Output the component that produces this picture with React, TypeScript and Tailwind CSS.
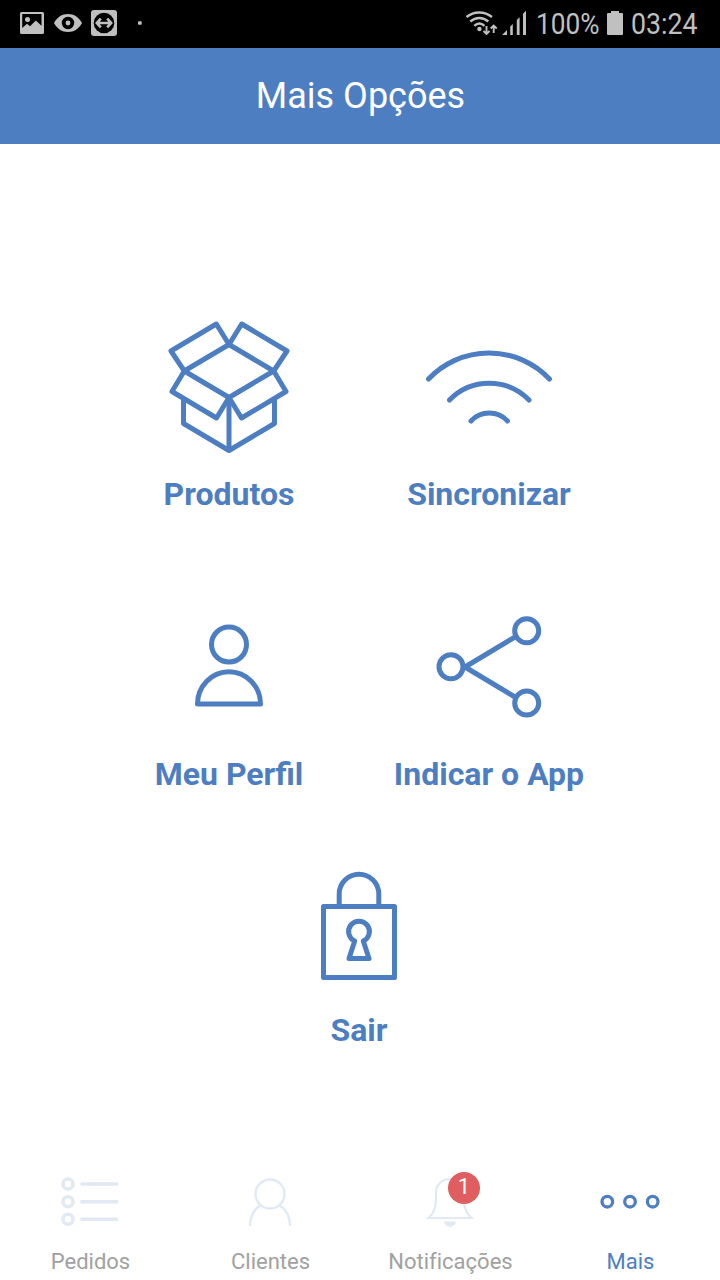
import type { ReactNode } from "react";

const BLUE = "#4d7ec1";
const PALE = "#e1e9f5";

function Tile({ label, viewBox, children }: { label: string; viewBox: string; children: ReactNode }) {
  return (
    <button className="flex w-[260px] flex-col items-center text-[#4d7ec1]">
      <svg
        className="h-[140px] w-[140px]"
        viewBox={viewBox}
        fill="none"
        stroke={BLUE}
        strokeWidth={5}
        strokeLinejoin="round"
        strokeLinecap="round"
      >
        {children}
      </svg>
      <span className="mt-[17px] text-[32px] leading-10 font-bold whitespace-nowrap">{label}</span>
    </button>
  );
}

function Tab({ label, active, children }: { label: string; active?: boolean; children: ReactNode }) {
  return (
    <button className="flex flex-1 flex-col items-center">
      <svg className="h-[76px] w-[80px]" viewBox="0 0 80 76" fill="none" stroke={active ? BLUE : PALE}>
        {children}
      </svg>
      <span
        className={
          active
            ? "mt-2 pl-px text-[22px] leading-7 text-[#4d7ec1]"
            : "mt-2 pl-px text-[22px] leading-7 text-[#a1a1a1] [font-variant-ligatures:none]"
        }
      >
        {label}
      </span>
    </button>
  );
}

function StatusBar() {
  return (
    <div className="flex h-12 items-center justify-between bg-black text-[#c0c0c0]">
      <svg className="h-12 w-[150px]" viewBox="0 0 150 48" fill="#c0c0c0">
        <path
          fillRule="evenodd"
          d="M21.500 12h21a1.500 1.500 0 0 1 1.500 1.500v19a1.500 1.500 0 0 1-1.500 1.500h-21a1.500 1.500 0 0 1-1.500-1.500v-19a1.500 1.500 0 0 1 1.500-1.500Zm.7 2v14l4.800-4.200 3 2.500 5.800-5.800 5.700 5.300V14Z"
        />
        <circle cx="27.500" cy="19.400" r="2.500" />
        <path
          fillRule="evenodd"
          d="M54 23c3-5.700 8-9 14-9s11 3.300 14 9c-3 5.700-8 9-14 9s-11-3.300-14-9Zm14-6.200a6.200 6.200 0 1 0 0 12.400a6.200 6.200 0 0 0 0-12.400Z"
        />
        <circle cx="68" cy="23" r="2.400" />
        <rect x="91" y="10" width="26" height="26" rx="3" />
        <circle cx="104" cy="23" r="10.300" fill="#000" />
        <path
          d="M97 23h14M100.800 18.700 96.800 23l4 4.300M107.200 18.700l4 4.300-4 4.300"
          fill="none"
          stroke="#c0c0c0"
          strokeWidth="2.600"
        />
        <rect x="138" y="21.300" width="3.700" height="3.500" rx="0.800" />
      </svg>
      <div className="flex h-12 items-center">
        <svg className="h-12 w-[66px]" viewBox="464 0 66 48" fill="none" stroke="#c0c0c0" strokeWidth="2.400">
          <path d="M466.500 17c7.500-6 18-6 25.500 0M470.300 21.500c5.500-4.700 12.500-4.700 18 0M474.300 25.800c3.200-2.800 7-2.800 10.200 0" />
          <circle cx="479.400" cy="29" r="2.200" fill="#c0c0c0" stroke="none" />
          <path strokeWidth="1.900" d="M486.500 26v7.500M483.500 31l3 3 3-3M493.700 33v-7.500M490.700 28.500l3-3 3 3" />
          <path
            fill="#c0c0c0"
            stroke="none"
            d="M502 35l5-5V35ZM510.200 26.500l2.600-2.600v11.100h-2.600ZM516.800 20l2.800-2.800v17.800h-2.800ZM523 13.800l3-3v24.200h-3Z"
          />
        </svg>
        <span className="w-[77px] text-[30px] leading-12">
          <span className="ml-[6px] inline-block origin-left scale-x-[0.875] whitespace-nowrap">100%</span>
        </span>
        <svg className="h-12 w-4" viewBox="607 0 16 48" fill="#c0c0c0">
          <path d="M611 11h8v2h3q1 0 1 1v20q0 1-1 1h-14q-1 0-1-1V14q0-1 1-1h3Z" />
        </svg>
        <span className="w-[97px] text-[30px] leading-12">
          <span className="ml-2 inline-block origin-left scale-x-[0.890] whitespace-nowrap">03:24</span>
        </span>
      </div>
    </div>
  );
}

export default function App() {
  return (
    <div className="flex h-[1280px] w-[720px] flex-col bg-white font-['Roboto',sans-serif]">
      <StatusBar />
      <header className="flex h-24 items-center justify-center bg-[#4d7ec1] pl-px text-[36px] text-white">
        Mais Opções
      </header>

      <main className="flex flex-1 flex-col items-center pt-[173px] pr-[2px]">
        <div className="flex">
          <Tile label="Produtos" viewBox="159 317 140 140">
            <path d="M216.300 324 171 351l13.300 20L229 344.500ZM241.700 324l45.300 27-13.300 20L229 344.500ZM184.300 371 172 391.500 216.500 418 229 397.500ZM273.700 371l12.300 20.500-44.500 26.500L229 397.500Z" />
            <path d="M183.500 400v23.500l45.500 27 45.500-27V400M229 398v51" />
          </Tile>
          <Tile label="Sincronizar" viewBox="419 317 140 140">
            <path d="M428.500 379a83.400 83.400 0 0 1 121 0M449.500 400a55.600 55.600 0 0 1 79.500 0M471 421a25 25 0 0 1 36.500 0" />
          </Tile>
        </div>
        <div className="mt-[83px] flex">
          <Tile label="Meu Perfil" viewBox="159 597 140 140">
            <circle cx="229" cy="644.500" r="17.500" />
            <path d="M197.500 704a31.500 32.300 0 0 1 63 0Z" />
          </Tile>
          <Tile label="Indicar o App" viewBox="419 597 140 140">
            <circle cx="451" cy="666.700" r="12" />
            <circle cx="526.700" cy="630.700" r="12" />
            <circle cx="526.700" cy="703" r="12" />
            <path d="M515 637 465 667l50 30" />
          </Tile>
        </div>
        <div className="mt-[59px] flex">
          <Tile label="Sair" viewBox="289 853 140 140">
            <path d="M323.500 906.500h71v71h-71ZM339.200 906v-12a19.800 19.800 0 0 1 39.600 0v12" />
            <path d="M354.700 941a10.400 10.400 0 1 1 8.600 0l5.700 17.600h-20Z" />
          </Tile>
        </div>
      </main>

      <nav className="flex h-[120px] pt-1">
        <Tab label="Pedidos">
          <g strokeWidth="3.500">
            <circle cx="18" cy="20" r="5" />
            <circle cx="18" cy="37.700" r="5" />
            <circle cx="18" cy="55.300" r="5" />
            <path d="M30.500 20H68M30.500 37.700H68M30.500 55.300H68" />
          </g>
        </Tab>
        <Tab label="Clientes">
          <g strokeWidth="2.400">
            <circle cx="40" cy="30" r="14.500" />
            <path d="M30 41.500c-6 4-10 11-10 20.500M50 41.500c6 4 10 11 10 20.500" />
          </g>
        </Tab>
        <Tab label="Notificações">
          <path
            strokeWidth="2.200"
            d="M18.500 54h43c-6-5-7.500-10.500-7.500-18V29c0-8-6-14-14-14s-14 6-14 14v7c0 7.500-1.500 13-7.500 18Z"
          />
          <path d="M34 57.500h12c-.5 3-3 5.200-6 5.200s-5.500-2.200-6-5.200Z" fill={PALE} stroke="none" />
          <circle cx="54" cy="24" r="16" fill="#e15e60" stroke="none" />
          <text x="54" y="30.200" textAnchor="middle" fontSize="22" fill="#fff" stroke="none">
            1
          </text>
        </Tab>
        <Tab label="Mais" active>
          <g strokeWidth="3.300">
            <circle cx="17.300" cy="37.700" r="5.300" />
            <circle cx="40" cy="37.700" r="5.300" />
            <circle cx="62.700" cy="37.700" r="5.300" />
          </g>
        </Tab>
      </nav>
    </div>
  );
}
